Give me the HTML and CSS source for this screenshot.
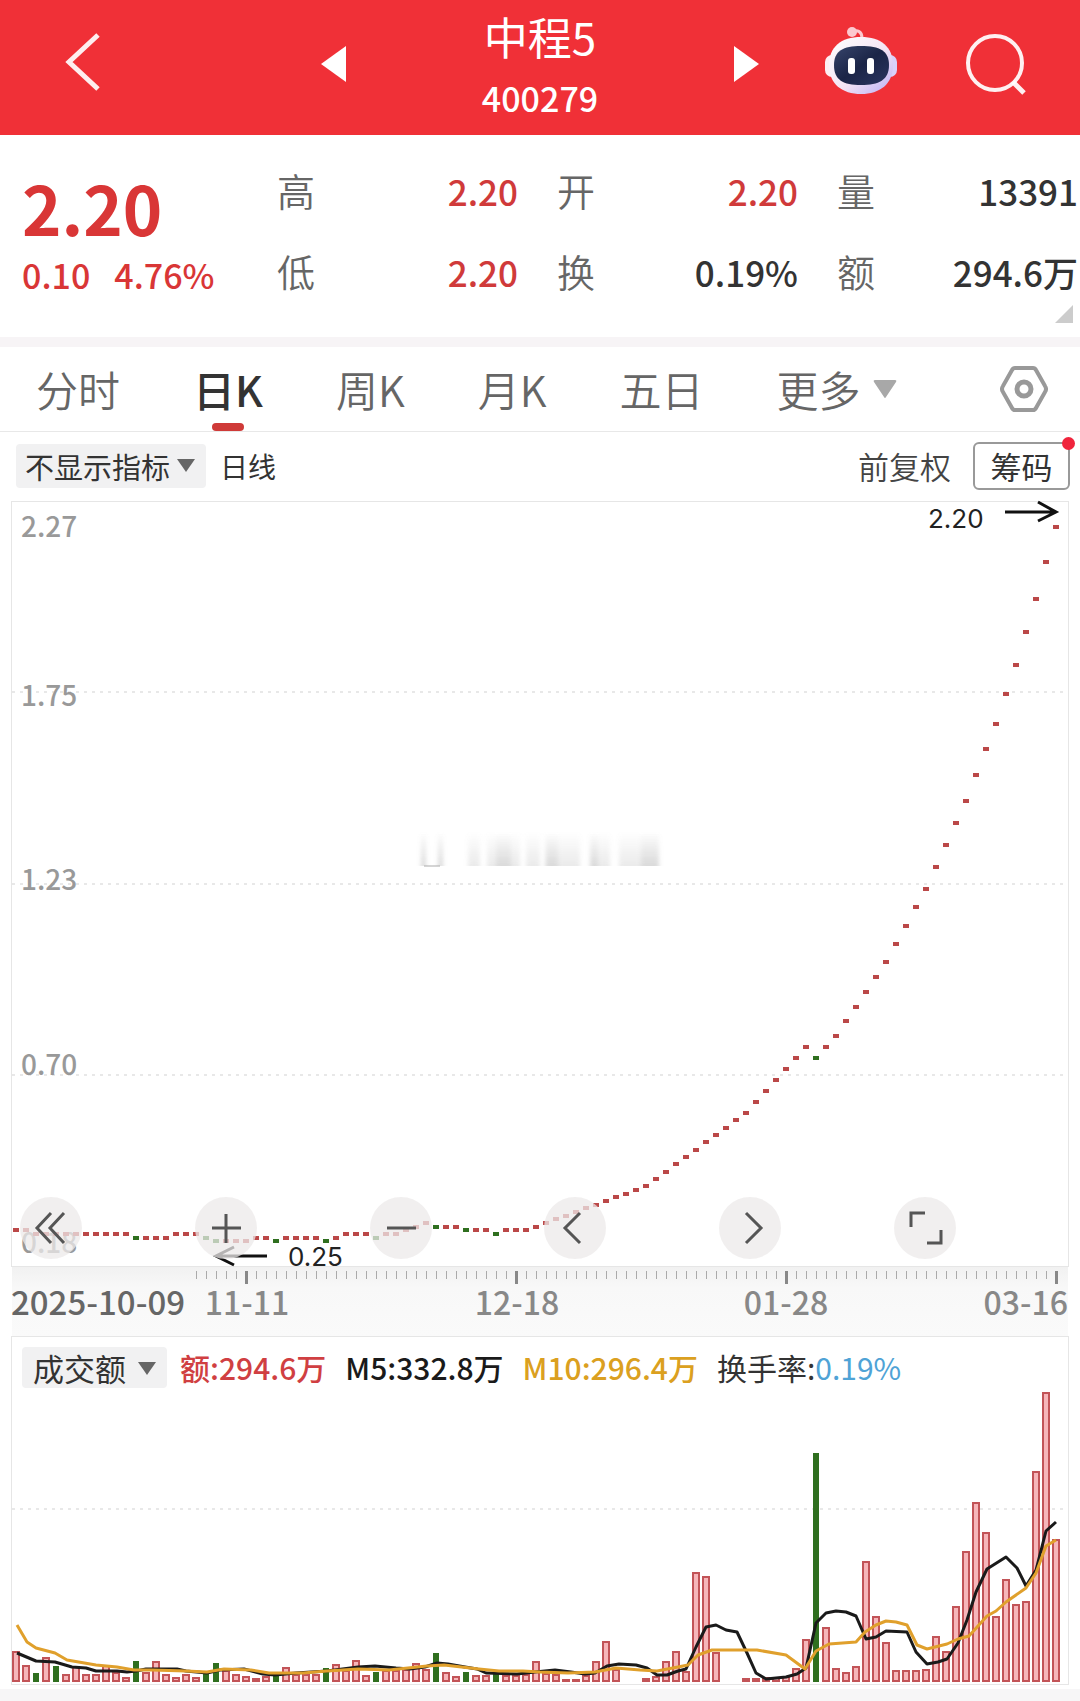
FILE: index.html
```html
<!DOCTYPE html>
<html lang="zh-CN">
<head>
<meta charset="utf-8">
<meta name="viewport" content="width=device-width, initial-scale=1">
<title>中程5 400279</title>
<link rel="stylesheet" href="styles.css">
</head>
<body>
<header class="topbar">
  <div class="topbar-left">
    <button class="icon-btn" type="button" aria-label="返回">
      <svg width="36" height="60" viewBox="0 0 36 60"><path d="M34 3 5 30 34 57" fill="none" stroke="#fff" stroke-opacity=".92" stroke-width="5"/></svg>
    </button>
  </div>
  <div class="stepper">
    <button class="icon-btn" type="button" aria-label="上一只">
      <svg width="25" height="38" viewBox="0 0 25 38"><path d="M25 1v36L0 19z" fill="#fff"/></svg>
    </button>
    <div class="stock">
      <h1 class="stock-name">中程5</h1>
      <p class="stock-code">400279</p>
    </div>
    <button class="icon-btn" type="button" aria-label="下一只">
      <svg width="25" height="38" viewBox="0 0 25 38"><path d="M0 1v36L25 19z" fill="#fff"/></svg>
    </button>
  </div>
  <div class="topbar-right">
    <button class="icon-btn" type="button" aria-label="智能助手">
      <svg width="74" height="76" viewBox="0 0 74 76">
        <defs>
          <linearGradient id="shell" x1="0" y1="0" x2="1" y2="1"><stop offset="0" stop-color="#fff"/><stop offset=".55" stop-color="#f4e4f4"/><stop offset="1" stop-color="#b9adf5"/></linearGradient>
          <linearGradient id="visor" x1="0" y1="0" x2="1" y2="1"><stop offset="0" stop-color="#37446b"/><stop offset=".5" stop-color="#1b2547"/><stop offset="1" stop-color="#2b3560"/></linearGradient>
        </defs>
        <path d="M27 6c7-3 11 0 11 6" fill="none" stroke="#fcc8cf" stroke-width="3"/>
        <circle cx="28" cy="6" r="5" fill="#fcc8cf"/>
        <rect x="1" y="29" width="14" height="22" rx="7" fill="#fdeef2"/>
        <rect x="59" y="29" width="14" height="22" rx="7" fill="#d9d0fa"/>
        <path d="M37 11c20 0 32 10 32 28 0 19-13 29-32 29S5 58 5 39c0-18 12-28 32-28z" fill="url(#shell)"/>
        <path d="M37 20c19 0 28 5 28 19 0 15-10 20-28 20S10 54 10 39c0-14 9-19 27-19z" fill="url(#visor)"/>
        <rect x="24" y="32" width="7" height="16" rx="3" fill="#fff"/>
        <rect x="43" y="32" width="7" height="16" rx="3" fill="#fff"/>
      </svg>
    </button>
    <button class="icon-btn" type="button" aria-label="搜索">
      <svg width="62" height="62" viewBox="0 0 62 62"><circle cx="30" cy="30" r="27" fill="none" stroke="#fff" stroke-opacity=".93" stroke-width="4"/><path d="M48 49 59 60" stroke="#fff" stroke-opacity=".93" stroke-width="5"/></svg>
    </button>
  </div>
</header>

<main>
<section class="quote">
  <div class="last">
    <p class="last-price">2.20</p>
    <p class="last-change"><span>0.10</span><span>4.76%</span></p>
  </div>
  <dl class="stats">
    <div class="stat"><dt>高</dt><dd class="up">2.20</dd></div>
    <div class="stat"><dt>开</dt><dd class="up">2.20</dd></div>
    <div class="stat"><dt>量</dt><dd>13391</dd></div>
    <div class="stat"><dt>低</dt><dd class="up">2.20</dd></div>
    <div class="stat"><dt>换</dt><dd>0.19%</dd></div>
    <div class="stat"><dt>额</dt><dd>294.6万</dd></div>
  </dl>
  <span class="expand"></span>
</section>

<nav class="tabs">
  <button class="tab" type="button">分时</button>
  <button class="tab is-active" type="button">日K</button>
  <button class="tab" type="button">周K</button>
  <button class="tab" type="button">月K</button>
  <button class="tab" type="button">五日</button>
  <button class="tab tab-more" type="button">更多<svg width="24" height="20" viewBox="0 0 24 20"><path d="M2 1h20q2 0 1 2L13 18q-1 2-2 0L1 3Q0 1 2 1z" fill="#a8a8a8"/></svg></button>
  <button class="icon-btn settings" type="button" aria-label="设置">
    <svg width="48" height="48" viewBox="0 0 48 48" fill="none" stroke="#999"><path d="M15 3h18q2 0 3 2l9 16q2 3 0 6l-9 16q-1 2-3 2H15q-2 0-3-2L3 27q-2-3 0-6l9-16q1-2 3-2z" stroke-width="4"/><circle cx="24" cy="24" r="7" stroke-width="5"/></svg>
  </button>
</nav>

<div class="toolbar">
  <div class="picker">
    <select class="picker-select" aria-label="指标"><option>不显示指标</option></select>
    <svg class="picker-arrow" width="18" height="13" viewBox="0 0 18 13"><path d="M0 0h18L9 13z" fill="#666"/></svg>
  </div>
  <span class="period">日线</span>
  <button class="adjust" type="button">前复权</button>
  <button class="chips" type="button">筹码</button>
</div>

<section class="panel price-panel">
  <svg class="plot" id="price" viewBox="12 502 1056 764">
    <defs>
      <linearGradient id="fade" x1="0" y1="0" x2="0" y2="1"><stop offset="0" stop-color="#999" stop-opacity="0"/><stop offset="1" stop-color="#999" stop-opacity=".2"/></linearGradient>
      <filter id="soft" x="-5%" y="0" width="110%" height="100%"><feGaussianBlur stdDeviation="2 0"/></filter>
    </defs>
    <g class="grid"><path d="M12 692H1068M12 884H1068M12 1075H1068"/></g>
    <g fill="url(#fade)" filter="url(#soft)">
      <rect x="421" y="832" width="5" height="34"/><rect x="438" y="832" width="5" height="34"/>
      <rect x="421" y="832" width="5" height="34"/><rect x="438" y="832" width="5" height="34"/>
      <rect x="468" y="832" width="12" height="34"/><rect x="487" y="832" width="33" height="34"/>
      <rect x="496" y="832" width="15" height="34"/><rect x="526" y="832" width="14" height="34"/>
      <rect x="545" y="832" width="35" height="34"/><rect x="546" y="832" width="12" height="34"/>
      <rect x="590" y="832" width="8" height="34"/><rect x="590" y="832" width="20" height="34"/>
      <rect x="619" y="832" width="10" height="34"/><rect x="629" y="832" width="12" height="34"/>
      <rect x="641" y="832" width="18" height="34"/><rect x="641" y="832" width="18" height="34"/>
    </g>
    <path d="M424 866h16" stroke="#aaa" stroke-width="1"/>
    <g class="scale">
      <text x="21" y="537">2.27</text>
      <text x="21" y="706">1.75</text>
      <text x="21" y="890">1.23</text>
      <text x="21" y="1075">0.70</text>
      <text x="21" y="1253">0.18</text>
    </g>
    <g id="candles"></g>
    <g class="mark">
      <text x="928" y="528">2.20</text>
      <path d="M1005 512H1055M1038 502 1056 512 1038 521"/>
      <text x="288" y="1266">0.25</text>
      <path d="M267 1256H217M234 1247 216 1256 234 1265"/>
    </g>
  </svg>
  <div class="controls">
    <button class="control" type="button" aria-label="最早"><svg viewBox="0 0 62 62"><path d="M31 16 17 31 31 46M44 16 30 31 44 46"/></svg></button>
    <button class="control" type="button" aria-label="放大"><svg viewBox="0 0 62 62"><path d="M31 17V46M17 31H46"/></svg></button>
    <button class="control" type="button" aria-label="缩小"><svg viewBox="0 0 62 62"><path d="M17 31H46"/></svg></button>
    <button class="control" type="button" aria-label="左移"><svg viewBox="0 0 62 62"><path d="M36 16 21 31 36 46"/></svg></button>
    <button class="control" type="button" aria-label="右移"><svg viewBox="0 0 62 62"><path d="M27 16 42 31 27 46"/></svg></button>
    <button class="control" type="button" aria-label="全屏"><svg viewBox="0 0 62 62"><path d="M17 30V16H31M47 33V46H33"/></svg></button>
  </div>
</section>

<div class="axis">
  <svg class="plot" viewBox="12 1267 1056 69">
    <g id="ticks"></g>
    <g class="dates">
      <text x="11" y="1315" class="date-first">2025-10-09</text>
      <text x="247" y="1315" text-anchor="middle">11-11</text>
      <text x="517" y="1315" text-anchor="middle">12-18</text>
      <text x="786" y="1315" text-anchor="middle">01-28</text>
      <text x="1068" y="1315" text-anchor="end">03-16</text>
    </g>
  </svg>
</div>

<section class="panel">
  <div class="legend">
    <div class="picker">
      <select class="picker-select is-large" aria-label="副图指标"><option>成交额</option></select>
      <svg class="picker-arrow" width="18" height="13" viewBox="0 0 18 13"><path d="M0 0h18L9 13z" fill="#666"/></svg>
    </div>
    <span class="amount">额:294.6万</span>
    <span class="ma5">M5:332.8万</span>
    <span class="ma10">M10:296.4万</span>
    <span class="turnover">换手率:<b>0.19%</b></span>
  </div>
  <svg class="plot" viewBox="12 0 1056 294">
    <g class="grid"><path d="M12 119H1068"/></g>
    <g id="volumes"></g>
    <polyline class="line-ma5" points="17,263 36,271 55,272 72,277 86,278 96,281 117,281 127,282 136,281 146,279 177,279 186,281 207,283 220,280 244,279 263,284 275,285 296,283 327,281 358,277 375,276 396,278 410,279 425,277 437,273 448,274 465,277 477,279 486,283 517,284 535,282 555,280 571,282 585,284 595,283 607,276 619,274 636,275 647,278 657,285 667,285 678,281 686,279 696,257 706,237 716,235 726,240 737,242 747,263 756,283 766,289 786,287 797,284 806,278 816,233 826,223 836,221 846,222 856,226 866,249 876,247 886,241 907,242 916,262 927,274 938,272 947,269 958,253 967,230 976,202 987,179 1006,167 1017,178 1026,196 1036,180 1046,141 1056,132"/>
    <polyline class="line-ma10" points="17,235 27,252 36,258 55,263 67,270 96,275 117,277 134,280 152,280 186,281 207,282 224,279 251,280 269,283 303,283 327,281 358,279 389,280 427,276 444,275 479,279 499,281 523,281 540,282 568,283 595,282 616,278 640,280 657,281 678,277 688,275 698,265 712,260 757,260 786,265 805,279 816,261 829,254 856,252 865,242 876,235 886,231 896,232 907,235 917,255 927,259 947,254 958,249 969,246 987,226 996,221 1006,212 1026,198 1036,183 1046,156 1056,150"/>
  </svg>
</section>
</main>
<script src="chart.js"></script>
</body>
</html>
```
FILE: styles.css
```css
* { box-sizing: border-box; }

body {
  margin: 0;
  background: #f7f6f7;
  color: #333;
  font-family: "Noto Sans CJK SC", "Noto Sans", sans-serif;
}

h1, p, dl, dd { margin: 0; font-weight: inherit; }

button, select {
  margin: 0;
  padding: 0;
  border: 0;
  background: none;
  color: inherit;
  font: inherit;
}

svg { display: block; }

main { background: #fff; padding-bottom: 4px; }

.icon-btn { display: flex; align-items: center; justify-content: center; }

/* Top bar */
.topbar {
  display: grid;
  grid-template-columns: 1fr 438px 1fr;
  align-items: center;
  height: 135px;
  background: #f03037;
  color: #fff;
}
.topbar-left { padding: 0 0 14px 64px; }
.topbar-right {
  display: flex;
  align-items: center;
  justify-content: flex-end;
  gap: 67px;
  padding: 0 53px 10px 0;
}
.stepper { display: flex; align-items: center; justify-content: space-between; padding-bottom: 10px; }
.stock { text-align: center; padding-top: 4px; }
.stock-name { font-size: 44px; line-height: 64px; font-weight: 400; }
.stock-code { font-size: 34px; line-height: 60px; font-weight: 500; }

/* Quote */
.quote {
  position: relative;
  display: grid;
  grid-template-columns: 255px 1fr;
  padding: 16px 2px 24px 22px;
  border-bottom: 10px solid #f7f4f6;
}
.last { color: #d93636; }
.last-price { font-size: 67px; line-height: 88px; padding-top: 12px; margin-bottom: 4px; font-weight: 700; }
.last-change {
  display: flex;
  gap: 24px;
  font-size: 34px;
  line-height: 40px;
  font-weight: 500;
}
.stats { display: grid; grid-template-columns: repeat(3, 1fr); column-gap: 39px; }
.stat {
  display: flex;
  justify-content: space-between;
  font-size: 35px;
  line-height: 80px;
  height: 81px;
  font-weight: 500;
}
.stat dt { font-size: 38px; line-height: 78px; font-weight: 350; color: #666; }
.up { color: #d03a3a; }
.expand {
  position: absolute;
  right: 7px;
  bottom: 14px;
  border: 9px solid transparent;
  border-right-color: #ccc;
  border-bottom-color: #ccc;
}

/* Period tabs */
.tabs {
  display: flex;
  align-items: center;
  gap: 73px;
  height: 85px;
  padding: 0 32px 0 36px;
  border-bottom: 1px solid #e8e8e8;
}
.tab { position: relative; font-size: 42px; line-height: 84px; font-weight: 350; color: #666; white-space: nowrap; }
.tab.is-active { font-weight: 500; color: #333; }
.tab.is-active::after {
  content: "";
  position: absolute;
  left: 50%;
  bottom: 0;
  width: 32px;
  height: 8px;
  margin-left: -16px;
  border-radius: 4px;
  background: #cf3a38;
}
.tab-more { display: flex; align-items: center; gap: 12px; }
.settings { margin-left: auto; }

/* Indicator toolbar */
.toolbar {
  display: flex;
  align-items: center;
  height: 69px;
  padding: 0 10px 2px 16px;
}
.picker { position: relative; }
.picker-select {
  appearance: none;
  display: block;
  height: 44px;
  padding: 0 35px 0 9px;
  border-radius: 4px;
  background: #f1f1f2;
  font-size: 29px;
  line-height: 44px;
}
.picker-select.is-large { height: 41px; padding: 0 41px 0 11px; font-size: 31px; line-height: 41px; }
.picker-arrow { position: absolute; right: 11px; top: 15px; pointer-events: none; }
.period { margin-left: 14px; font-size: 28px; }
.adjust { margin-left: auto; font-size: 31px; font-weight: 350; color: #444; }
.chips {
  position: relative;
  width: 97px;
  height: 48px;
  margin-left: 22px;
  border: 2px solid #999;
  border-radius: 6px;
  font-size: 31px;
  line-height: 42px;
  color: #333;
}
.chips::after {
  content: "";
  position: absolute;
  top: -7px;
  right: -7px;
  width: 13px;
  height: 13px;
  border-radius: 50%;
  background: #f0243c;
}

/* Chart panels */
.panel { position: relative; margin: 0 11px; border: 1px solid #e6e6e6; background: #fff; }
.plot { width: 100%; height: auto; overflow: visible; }
.grid path { stroke: #e8e8e8; stroke-width: 2; stroke-dasharray: 3 5; }
.scale text { font-size: 28px; font-weight: 500; fill: #999; }
.mark text { font-family: Inter, sans-serif; font-size: 26px; fill: #222; }
.mark path { fill: none; stroke: #111; stroke-width: 3; }
.rise { fill: #bb4848; }
.fall { fill: #2f6f1f; }
.controls {
  position: absolute;
  left: 8px;
  right: 112px;
  bottom: 7px;
  display: flex;
  justify-content: space-between;
}
.control { width: 62px; height: 62px; border-radius: 50%; background: rgba(236, 233, 234, .75); }
.control path { fill: none; stroke: #555; stroke-width: 3; }

/* Date axis */
.axis { margin: 0 12px; background: linear-gradient(#f1f1f1, #f8f8f8 30%, #fafafa); }
.tick { fill: #aaa; }
.tick-major { fill: #888; }
.dates text { font-size: 32px; font-weight: 500; fill: #888; }
.dates .date-first { font-size: 33px; fill: #666; }

/* Turnover panel */
.legend {
  display: flex;
  align-items: center;
  gap: 19px;
  height: 53px;
  padding: 10px 0 2px 10px;
  font-size: 30px;
  line-height: 41px;
  font-weight: 500;
  white-space: nowrap;
}
.legend .picker { margin-right: -6px; font-weight: 400; }
.amount { color: #d03f42; }
.ma5 { color: #1a1a1a; }
.ma10 { color: #dba020; }
.turnover { font-weight: 400; }
.turnover b { font-weight: 400; color: #4fa3d6; }
.bar-rise { fill: #f6b6ba; stroke: #c25458; stroke-width: 2; }
.line-ma5, .line-ma10 { fill: none; stroke-width: 3; stroke-linejoin: round; }
.line-ma5 { stroke: #1a1a1a; }
.line-ma10 { stroke: #e0a02c; }
```
FILE: chart.js
```js
const NS = "http://www.w3.org/2000/svg";
const FIRST_X = 16;
const STEP = 10;

// Sessions that closed lower.
const falls = new Set([12, 19, 20, 26, 31, 36, 42, 45, 48, 80]);
const volumeFalls = new Set([2, 4, ...falls]);

const closes = [
  1230, 1230, 1234, 1234, 1234, 1234, 1234, 1234, 1234, 1234, 1234, 1234, 1238, 1238, 1238,
  1238, 1234, 1234, 1234, 1238, 1241, 1241, 1241, 1241, 1238, 1238, 1241, 1238, 1238, 1238,
  1238, 1241, 1238, 1234, 1234, 1234, 1238, 1234, 1234, 1230, 1227, 1223, 1227, 1227, 1227,
  1230, 1230, 1230, 1234, 1230, 1230, 1230, 1227, 1223, 1219, 1216, 1212, 1208, 1205, 1201,
  1197, 1194, 1190, 1186, 1179, 1172, 1164, 1157, 1150, 1142, 1135, 1128, 1120, 1113, 1102,
  1091, 1080, 1069, 1058, 1047, 1058, 1047, 1036, 1021, 1007, 992, 977, 962, 944, 926,
  907, 889, 867, 845, 823, 801, 775, 749, 724, 694, 665, 632, 599, 562, 527
];

const volumes = [
  31, 17, 9, 25, 16, 8, 16, 8, 8, 17, 10, 5, 21, 10, 21,
  8, 5, 8, 5, 8, 19, 12, 8, 6, 4, 6, 8, 15, 8, 8,
  8, 14, 18, 12, 22, 7, 10, 12, 12, 13, 19, 13, 29, 10, 6,
  10, 7, 7, 9, 7, 7, 8, 21, 9, 8, 3, 3, 7, 21, 41,
  13, 0, 0, 4, 6, 21, 31, 11, 110, 106, 30, 0, 0, 4, 4,
  5, 5, 6, 14, 43, 229, 55, 14, 10, 16, 121, 66, 40, 12, 12,
  12, 13, 46, 31, 76, 131, 180, 150, 66, 103, 78, 81, 211, 290, 143
];

function rect(parentId, x, y, width, height, className) {
  const el = document.createElementNS(NS, "rect");
  el.setAttribute("x", x);
  el.setAttribute("y", y);
  el.setAttribute("width", width);
  el.setAttribute("height", height);
  el.setAttribute("class", className);
  document.getElementById(parentId).appendChild(el);
}

closes.forEach((y, i) => {
  rect("candles", FIRST_X + i * STEP - 3, y - 2, 6, 4, falls.has(i) ? "fall" : "rise");
});

volumes.forEach((h, i) => {
  const x = FIRST_X + i * STEP;
  if (h === 0) return;
  if (volumeFalls.has(i)) rect("volumes", x - 3, 292 - h, 6, h, "fall");
  else rect("volumes", x - 3, 293 - h, 6, Math.max(h - 2, 1), "bar-rise");
});

for (let i = 18; i <= 104; i++) {
  const x = FIRST_X + i * STEP;
  const major = (i - 23) % 27 === 0;
  if (major) rect("ticks", x - 1, 1271, 3, 13, "tick-major");
  else rect("ticks", x, 1271, 1, 8, "tick");
}
```
